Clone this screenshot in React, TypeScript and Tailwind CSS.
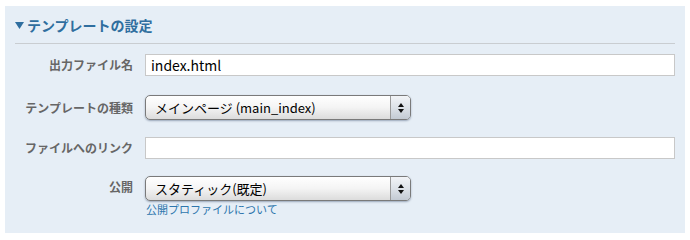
import React from "react";

const jp = { fontFamily: '"Lucida Grande", "Noto Sans CJK JP", "Liberation Sans", sans-serif' };

function Label({ children, top = false }: { children: React.ReactNode; top?: boolean }) {
  return (
    <div
      className={`w-[128px] shrink-0 text-right text-[12px] font-bold text-[#666666] ${top ? "pt-[2px]" : ""}`}
      style={jp}
    >
      {children}
    </div>
  );
}

function AquaSelect({ value }: { value: string }) {
  return (
    <div className="relative flex h-[25px] w-[266px] items-stretch rounded-[5px] border border-[#7a7a7a] bg-gradient-to-b from-[#ffffff] via-[#f4f4f4] to-[#dcdcdc] shadow-[0_1px_2px_rgba(60,80,110,0.45)]">
      <div className="flex flex-1 items-center pl-[9px] text-[13px] text-black" style={jp}>
        {value}
      </div>
      <div className="flex w-[20px] flex-col items-center justify-center gap-[2px] rounded-r-[4px] border-l border-[#9a9a9a] bg-gradient-to-b from-[#f2f4f7] via-[#dde2e8] to-[#c3cad3]">
        <svg width="6" height="4" viewBox="0 0 6 4"><path d="M3 0 L6 4 L0 4 Z" fill="#111" /></svg>
        <svg width="6" height="4" viewBox="0 0 6 4"><path d="M0 0 L6 0 L3 4 Z" fill="#111" /></svg>
      </div>
    </div>
  );
}

export default function App() {
  return (
    <div className="h-[240px] w-[690px] bg-white pt-[6px] pl-[5px]">
      <div className="h-[227px] w-[680px] bg-[#e6eef6] px-[10px]">
        <div className="flex h-[38px] items-center gap-[3px] border-b border-[#c9cdd1] pt-[1px]">
          <svg width="9" height="7" viewBox="0 0 9 7" className="mt-[1px]">
            <path d="M0 0 L9 0 L4.5 7 Z" fill="#2f6e9f" />
          </svg>
          <span className="text-[14px] font-bold text-[#2f6e9f]" style={jp}>
            テンプレートの設定
          </span>
        </div>

        <div className="ml-[-10px] mt-[10px] flex items-center gap-[12px]">
          <Label>出力ファイル名</Label>
          <div className="flex h-[22px] w-[530px] items-center border border-[#c8c8c8] bg-white pl-[5px] text-[14px] text-black" style={jp}>
            index.html
          </div>
        </div>

        <div className="ml-[-10px] mt-[19px] flex items-center gap-[12px]">
          <Label>テンプレートの種類</Label>
          <AquaSelect value="メインページ (main_index)" />
        </div>

        <div className="ml-[-10px] mt-[17px] flex items-center gap-[12px]">
          <Label>ファイルへのリンク</Label>
          <div className="h-[22px] w-[530px] border border-[#c8c8c8] bg-white" />
        </div>

        <div className="ml-[-10px] mt-[17px] flex items-start gap-[12px]">
          <Label top>公開</Label>
          <div className="flex flex-col">
            <AquaSelect value="スタティック(既定)" />
            <a className="mt-[1px] pl-[1px] text-[11px] leading-[14px] text-[#2e76ad]" style={jp}>
              公開プロファイルについて
            </a>
          </div>
        </div>
      </div>
    </div>
  );
}
